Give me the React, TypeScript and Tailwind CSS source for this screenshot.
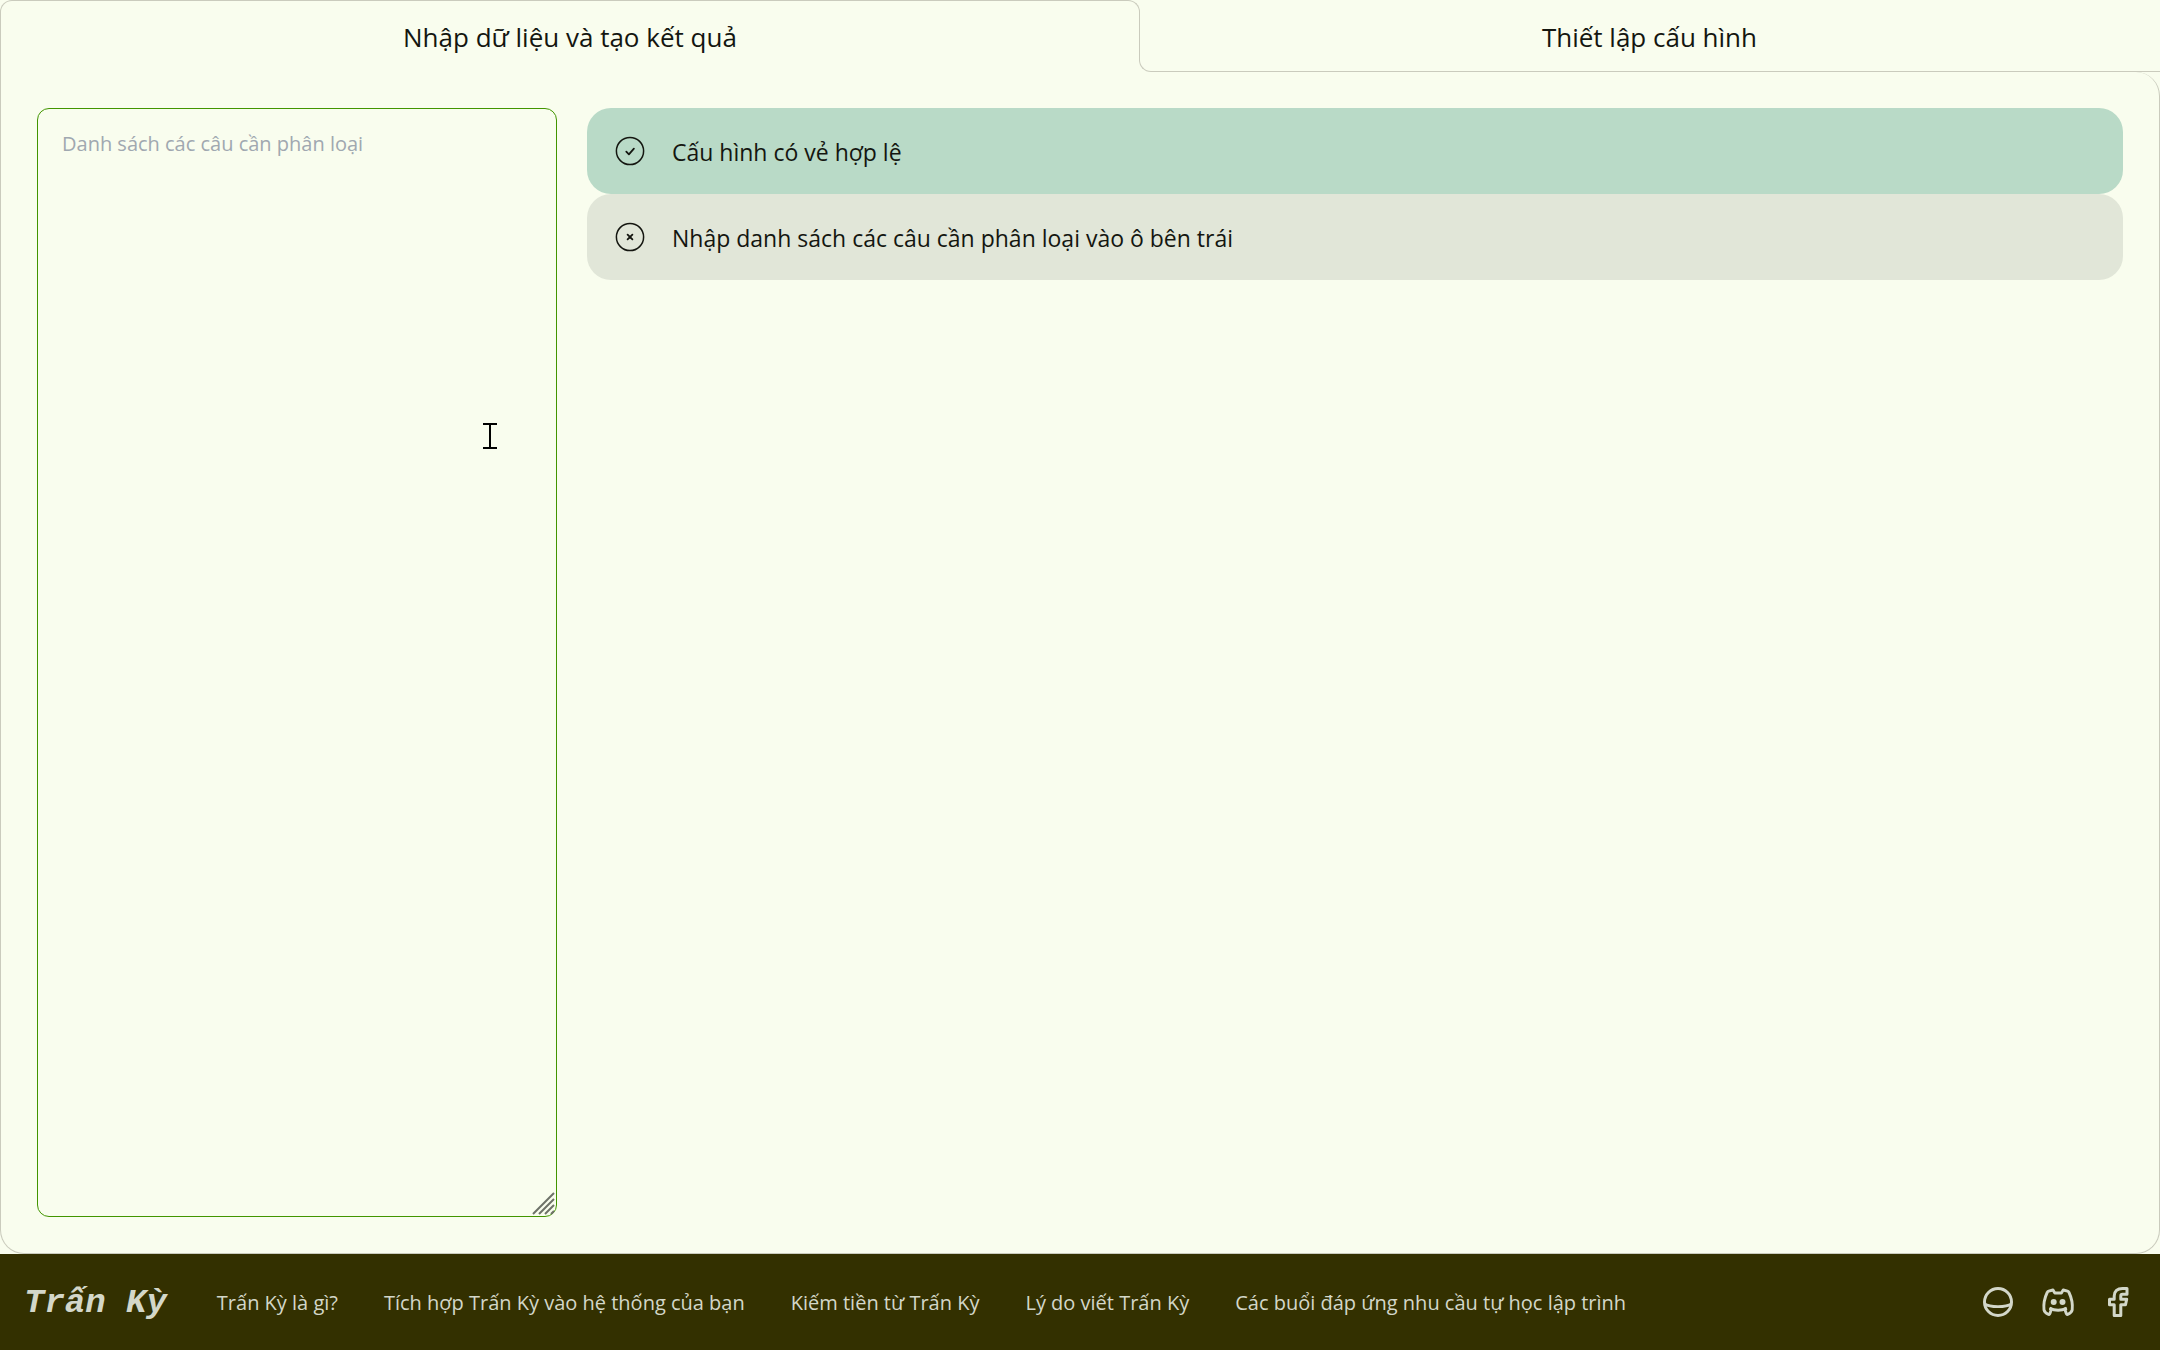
import React from "react";

type Notice = { kind: "ok" | "missing"; text: string };

const notices: Notice[] = [
  { kind: "ok", text: "Cấu hình có vẻ hợp lệ" },
  { kind: "missing", text: "Nhập danh sách các câu cần phân loại vào ô bên trái" },
];

const links = [
  "Trấn Kỳ là gì?",
  "Tích hợp Trấn Kỳ vào hệ thống của bạn",
  "Kiếm tiền từ Trấn Kỳ",
  "Lý do viết Trấn Kỳ",
  "Các buổi đáp ứng nhu cầu tự học lập trình",
];

function StatusIcon({ kind }: { kind: Notice["kind"] }) {
  return (
    <svg viewBox="0 0 36 36" className="size-9 shrink-0" fill="none" stroke="currentColor" strokeWidth="1.5" strokeLinecap="round" strokeLinejoin="round" aria-hidden="true">
      <circle cx="18" cy="18" r="13.6" />
      {kind === "ok" ? (
        <path strokeWidth="1.8" d="M14.3 18.7l2.6 2.6 5-5.6" />
      ) : (
        <path strokeWidth="1.8" d="M15.6 15.6l4.8 4.8m0-4.8l-4.8 4.8" />
      )}
    </svg>
  );
}

function GlobeIcon() {
  return (
    <svg viewBox="0 0 36 36" className="size-9" fill="none" stroke="currentColor" strokeWidth="3" aria-hidden="true">
      <circle cx="18" cy="18" r="13.5" />
      <path strokeWidth="2.8" d="M4.500 20c3 1.900 8 2.600 13.500 2.600s10.500-.7 13.500-2.600" />
    </svg>
  );
}

function DiscordIcon() {
  return (
    <svg viewBox="0 0 36 36" className="size-9" fill="none" stroke="currentColor" strokeWidth="2.900" strokeLinejoin="round" aria-hidden="true">
      <path d="M9.500 24l2 1-1.600 4.500c-.3.900-1 1.200-1.800.8-2-1-3.600-2.500-4.100-4.500-.6-5.500.9-12.500 3.200-17.300.3-.7.8-1.100 1.500-1.300L13 6l1.800 3h6.600l1.800-3 4.300 1.200c.7.2 1.200.6 1.500 1.300 2.300 4.800 3.800 11.800 3.200 17.300-.5 2-2.100 3.500-4.100 4.500-.8.4-1.500.1-1.800-.8L24.700 25l2-1" />
      <path d="M9.500 24.300c5 2.200 12.200 2.200 17.200 0" />
      <circle cx="13.700" cy="18" r="3" fill="currentColor" stroke="none" />
      <circle cx="22.500" cy="18" r="3" fill="currentColor" stroke="none" />
    </svg>
  );
}

function FacebookIcon() {
  return (
    <svg viewBox="0 0 36 36" className="size-9" fill="none" stroke="currentColor" strokeWidth="3" strokeLinejoin="round" aria-hidden="true">
      <path d="M27 4.500h-4.500c-5 0-8.300 2.700-8.300 7.500v3.200H9.500v5.600h4.700v10.700h6.600V20.800h4.700l1.200-5.600h-5.900V12c0-1 .7-1.700 1.700-1.700H27z" />
    </svg>
  );
}

export default function App() {
  return (
    <div className="flex min-h-screen flex-col bg-[#f9fdee] font-['Open_Sans','Noto_Sans',sans-serif] text-[#141610]">
      <div role="tablist" className="flex h-18">
        <button
          role="tab"
          aria-selected="true"
          className="relative flex-auto px-6 pt-0.5 text-[26px] before:absolute before:inset-x-0 before:top-0 before:bottom-3 before:rounded-t-xl before:border before:border-b-0 before:border-[#cacbbd] after:absolute after:bottom-0 after:left-0 after:h-3 after:border-l after:border-[#cacbbd]"
        >
          Nhập dữ liệu và tạo kết quả
        </button>
        <button
          role="tab"
          aria-selected="false"
          className="relative -ml-px flex-auto px-6 pt-0.5 text-[26px] before:absolute before:inset-x-0 before:bottom-0 before:h-3 before:rounded-bl-xl before:border-b before:border-l before:border-[#cacbbd]"
        >
          Thiết lập cấu hình
        </button>
      </div>

      <main role="tabpanel" className="grid flex-1 grid-cols-[65fr_192fr] gap-[30px] rounded-tr-3xl rounded-b-3xl border border-t-0 border-[#cacbbd] p-9">
        <div className="relative flex">
          <textarea
            aria-label="Danh sách các câu cần phân loại"
            placeholder="Danh sách các câu cần phân loại"
            className="w-full resize-none rounded-xl border border-[#429500] px-6 py-[18px] text-[20px] leading-[33px] outline-none placeholder:text-[#a0a8b0]"
          />
          <svg viewBox="0 0 24 24" className="pointer-events-none absolute right-px bottom-px size-6 text-[#6e7268]" fill="none" stroke="currentColor" strokeWidth="2" aria-hidden="true">
            <path d="M1 22L22 1M7 22L22 7M13 22l9-9M19 22l3-3" />
          </svg>
          <svg viewBox="0 0 14 26" className="pointer-events-none absolute top-[315px] right-[60px] h-[26px] w-3.5" fill="none" stroke="#000" strokeWidth="2" aria-hidden="true">
            <path d="M0 1h14M7 1v24M0 25h14" />
          </svg>
        </div>
        <div className="flex flex-col">
          {notices.map((n) => (
            <div
              key={n.kind}
              role="status"
              className={
                n.kind === "ok"
                  ? "flex h-[86px] items-center gap-6 rounded-3xl bg-[#b9dac7] px-[25px] text-[23px]"
                  : "flex h-[86px] items-center gap-6 rounded-3xl bg-[#e1e6d8] px-[25px] text-[23px]"
              }
            >
              <StatusIcon kind={n.kind} />
              <span className="pt-0.5">{n.text}</span>
            </div>
          ))}
        </div>
      </main>

      <footer className="flex h-24 items-center bg-[#333000] px-6 text-[#d3d7c9]">
        <a href="#" className="pt-0.5 font-['Liberation_Mono',monospace] text-[34px] font-bold italic">
          Trấn Kỳ
        </a>
        <nav className="ml-[50px] flex gap-[46px] pt-0.5 text-[20px]">
          {links.map((l) => (
            <a key={l} href="#">
              {l}
            </a>
          ))}
        </nav>
        <div className="ml-auto flex gap-6">
          <a href="#" aria-label="Trang chủ">
            <GlobeIcon />
          </a>
          <a href="#" aria-label="Discord">
            <DiscordIcon />
          </a>
          <a href="#" aria-label="Facebook">
            <FacebookIcon />
          </a>
        </div>
      </footer>
    </div>
  );
}
